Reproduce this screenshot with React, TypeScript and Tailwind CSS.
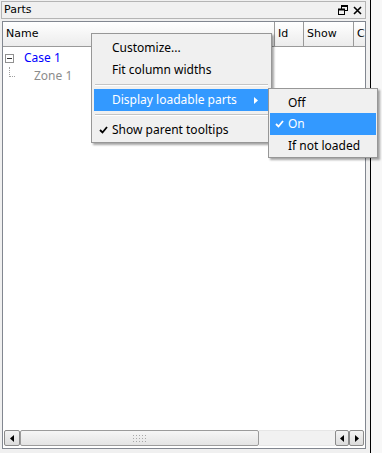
import React from 'react';

const ui = { fontFamily: '"Noto Sans", "DejaVu Sans", sans-serif' };
const hdr = { fontFamily: '"DejaVu Sans", "Liberation Sans", sans-serif' };

const Check = ({ color }: { color: string }) => (
  <svg width="9" height="8" viewBox="0 0 9 8">
    <path d="M1 4 L3.5 6.5 L8 1" stroke={color} strokeWidth="1.8" fill="none" />
  </svg>
);

const ArrowLeft = () => (
  <svg width="4" height="7" viewBox="0 0 4 7">
    <path d="M4 0 L0 3.5 L4 7 Z" fill="#000" />
  </svg>
);

const ArrowRight = () => (
  <svg width="4" height="7" viewBox="0 0 4 7">
    <path d="M0 0 L4 3.5 L0 7 Z" fill="#000" />
  </svg>
);

const HeaderCell = ({ label, width }: { label: string; width: string }) => (
  <div
    className={`${width} shrink-0 h-full flex items-center pl-[3px] border-r border-[#9a9a9a] bg-gradient-to-b from-white to-[#ececec] text-[11px] text-black overflow-hidden whitespace-nowrap`}
    style={hdr}
  >
    {label}
  </div>
);

export default function App() {
  return (
    <div className="relative w-[382px] h-[453px] bg-[#f0f0f0] flex overflow-hidden" style={ui}>
      {/* Dock panel */}
      <div className="w-[366px] flex flex-col pt-[1px] pl-[1px]">
        <div className="h-[18px] border border-[#b4b4b4] bg-[#f0f0f0] flex items-center justify-between pl-[2px] pr-[3px] text-[11px]" style={hdr}>
          <span>Parts</span>
          <div className="flex items-center gap-[5px]">
            <svg width="10" height="10" viewBox="0 0 10 10">
              <rect x="3.5" y="0.5" width="6" height="5" fill="none" stroke="#000" />
              <rect x="3.5" y="0.5" width="6" height="1.5" fill="#000" />
              <rect x="0.5" y="4" width="6" height="5.5" fill="#f0f0f0" stroke="#000" />
              <rect x="0.5" y="4" width="6" height="1.5" fill="#000" />
            </svg>
            <svg width="9" height="9" viewBox="0 0 9 9">
              <path d="M1 1 L8 8 M8 1 L1 8" stroke="#000" strokeWidth="1.6" />
            </svg>
          </div>
        </div>

        {/* Tree box */}
        <div className="mt-[2px] ml-[1px] h-[428px] border border-[#828790] bg-white flex flex-col">
          <div className="h-[25px] flex border-b border-[#9a9a9a] overflow-hidden">
            <HeaderCell label="Name" width="w-[272px]" />
            <HeaderCell label="Id" width="w-[29px]" />
            <HeaderCell label="Show" width="w-[50px]" />
            <HeaderCell label="C" width="w-[20px]" />
          </div>

          <div className="flex-1 relative">
            <div className="flex items-center h-[18px] mt-[2px] text-[12px]">
              <div className="w-[9px] h-[9px] ml-[2px] border border-[#919191] bg-white flex items-center justify-center">
                <div className="w-[5px] h-[1px] bg-[#333]" />
              </div>
              <span className="ml-[10px] text-[#0000ff]">Case 1</span>
            </div>
            <div className="flex items-center h-[18px] text-[12px]">
              <div className="ml-[6px] w-[6px] h-[10px] border-l border-b border-dotted border-[#a0a0a0] self-start" />
              <span className="ml-[19px] text-[#8c8c8c]">Zone 1</span>
            </div>
          </div>

          {/* Horizontal scrollbar */}
          <div className="h-[16px] flex mb-[2px] mx-[1px]">
            <div className="w-[16px] h-full border border-[#8b8b8b] rounded-[2px] bg-gradient-to-b from-[#f3f3f3] to-[#dcdcdc] flex items-center justify-center">
              <ArrowLeft />
            </div>
            <div className="w-[239px] h-full border border-[#9b9b9b] rounded-[2px] bg-gradient-to-b from-[#f6f6f6] to-[#e4e4e4] flex items-center justify-center">
              <div className="grid grid-cols-5 gap-[2px]">
                {Array.from({ length: 15 }).map((_, i) => (
                  <div key={i} className="w-[1px] h-[1px] bg-[#a8a8a8]" />
                ))}
              </div>
            </div>
            <div className="flex-1 h-full bg-[#f1f1f1] border-y border-[#e6e6e6]" />
            <div className="w-[14px] h-full border border-[#8b8b8b] rounded-[2px] bg-gradient-to-b from-[#f3f3f3] to-[#dcdcdc] flex items-center justify-center">
              <ArrowLeft />
            </div>
            <div className="w-[15px] h-full border border-[#8b8b8b] rounded-[2px] bg-gradient-to-b from-[#f3f3f3] to-[#dcdcdc] flex items-center justify-center">
              <ArrowRight />
            </div>
          </div>
        </div>
      </div>

      {/* Splitter line */}
      <div className="ml-[4px] w-[1px] h-full bg-black" />
      <div className="flex-1 bg-[#f7f7f7]" />

      {/* Context menu */}
      <div className="absolute left-[91px] top-[33px] w-[181px] border border-[#979797] bg-[#f0f0f0] shadow-[2px_2px_2px_rgba(0,0,0,0.35)] pt-[3px] pb-[1px] px-[2px] text-[12px] text-black">
        <div className="h-[22px] flex items-center pl-[18px]">Customize...</div>
        <div className="h-[22px] flex items-center pl-[18px]">Fit column widths</div>
        <div className="my-[3px] mx-[1px] h-[1px] bg-[#c5c5c5] border-b border-white box-content" />
        <div className="h-[22px] flex items-center justify-between pl-[18px] pr-[11px] bg-[#3399ff] text-white">
          <span>Display loadable parts</span>
          <svg width="4" height="7" viewBox="0 0 4 7">
            <path d="M0 0 L4 3.5 L0 7 Z" fill="#fff" />
          </svg>
        </div>
        <div className="my-[3px] mx-[1px] h-[1px] bg-[#c5c5c5] border-b border-white box-content" />
        <div className="h-[22px] flex items-center">
          <span className="w-[18px] flex justify-center pl-[1px]"><Check color="#000" /></span>
          <span>Show parent tooltips</span>
        </div>
      </div>

      {/* Submenu */}
      <div className="absolute left-[268px] top-[88px] w-[110px] border border-[#979797] bg-[#f0f0f0] shadow-[2px_2px_2px_rgba(0,0,0,0.35)] pt-[3px] pb-[1px] px-[1px] text-[12px] text-black">
        <div className="h-[21px] flex items-center pl-[18px]">Off</div>
        <div className="h-[22px] flex items-center bg-[#3399ff] text-white">
          <span className="w-[18px] flex justify-center"><Check color="#fff" /></span>
          <span>On</span>
        </div>
        <div className="h-[21px] flex items-center pl-[18px]">If not loaded</div>
      </div>
    </div>
  );
}
